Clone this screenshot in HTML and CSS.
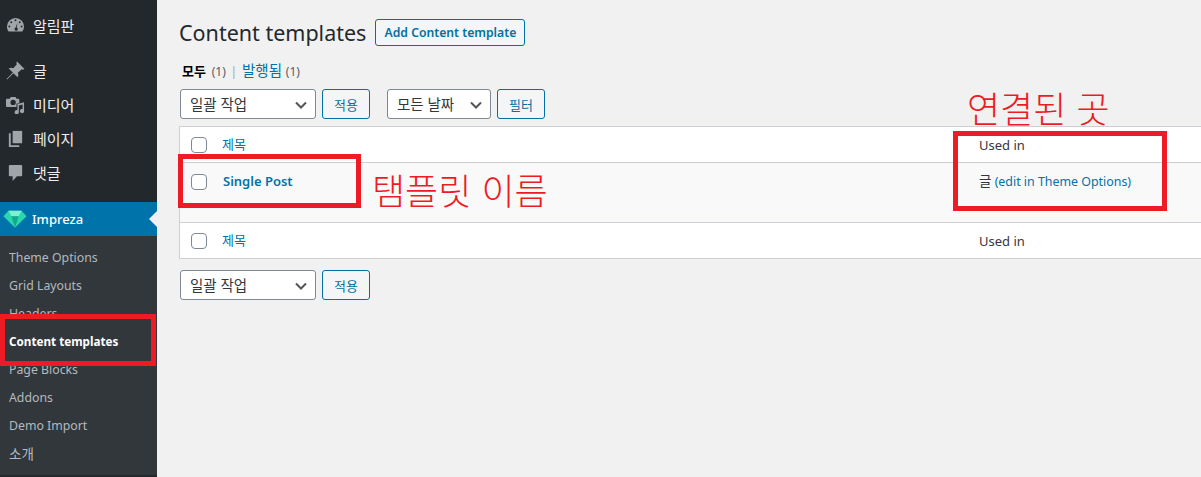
FILE: index.html
```html
<!DOCTYPE html>
<html lang="ko">
  <head>
    <meta charset="UTF-8" />
    <title>Content templates</title>
    <link rel="stylesheet" href="styles.css">
  </head>
  <body>
    <div class="sidebar">
      <ul class="menu">
        <li class="menu-item first">
          <svg class="icon" viewBox="0 0 20 20"><path fill-rule="evenodd" d="M10 2a9 9 0 0 0-9 9c0 2 .7 3.900 1.800 5.400h14.400A9 9 0 0 0 19 11a9 9 0 0 0-9-9zM10 3.500a1 1 0 1 1 0 2 1 1 0 0 1 0-2zM5.500 5.500a1 1 0 1 1 0 2 1 1 0 0 1 0-2zM14.500 5.500a1 1 0 1 1 0 2 1 1 0 0 1 0-2zM3.500 10a1 1 0 1 1 0 2 1 1 0 0 1 0-2zM16.500 10a1 1 0 1 1 0 2 1 1 0 0 1 0-2zM12 7l-.8 5.200a1.700 1.700 0 1 1-2.200 1.600c0-.7.400-1.300 1-1.500z"/></svg>
          <span>알림판</span>
        </li>
        <li class="menu-item gap">
          <svg class="icon" viewBox="1 1 18 18"><path d="M11.500 1.500l7 7-1.500.8-1-.6-3.800 3.400c.8 1.500.6 3-.2 4.400L8 12.500 2 18.500l-.5-.5 6-6-4-4c1.400-.8 2.900-1 4.400-.2l3.400-3.800-.6-1z"/></svg>
          <span>글</span>
        </li>
        <li class="menu-item">
          <svg class="icon" viewBox="0 0 20 20"><path fill-rule="evenodd" d="M5 2h5l1 2h2a1 1 0 0 1 1 1v3.500l-3 .8v3.200H1a1 1 0 0 1-1-1V5a1 1 0 0 1 1-1h3zM7.500 5a2.800 2.800 0 1 0 0 5.600 2.800 2.800 0 0 0 0-5.600z"/><path d="M19 7.500v9.300a2.200 2.200 0 1 1-1.500-2V10l-4 1v7a2.200 2.200 0 1 1-1.500-2V9.500z"/></svg>
          <span>미디어</span>
        </li>
        <li class="menu-item">
          <svg class="icon" viewBox="0 0 20 20"><path d="M7 2h10v13H7z"/><path d="M5 4.500v12.500h9v2H3V4.500z"/></svg>
          <span>페이지</span>
        </li>
        <li class="menu-item">
          <svg class="icon" viewBox="0 0 20 20"><path d="M4 2h12a1 1 0 0 1 1 1v10a1 1 0 0 1-1 1h-4.500L7 19v-5H4a1 1 0 0 1-1-1V3a1 1 0 0 1 1-1z"/></svg>
          <span>댓글</span>
        </li>
        <li class="menu-item current">
          <svg class="gem" viewBox="0 0 26 20"><path fill="#2ad6ae" d="M6 1h14l5.500 6L13 19.500.5 7z"/><path fill="#7df0d4" d="M6 1h14l-3 6H9z"/><path fill="#14a98c" d="M9 7h8l-4 12.500z"/></svg>
          <span>Impreza</span>
        </li>
      </ul>
      <ul class="submenu">
        <li>Theme Options</li>
        <li>Grid Layouts</li>
        <li>Headers</li>
        <li class="active">Content templates</li>
        <li>Page Blocks</li>
        <li>Addons</li>
        <li>Demo Import</li>
        <li class="ko">소개</li>
      </ul>
    </div>

    <div class="content">
      <div class="title-row">
        <h1>Content templates</h1>
        <a class="btn add-btn">Add Content template</a>
      </div>

      <div class="tabs">
        <b>모두</b> <span class="count first-count">(1)</span>
        <span class="sep">|</span>
        <a>발행됨</a> <span class="count">(1)</span>
      </div>

      <div class="actions">
        <div class="select bulk">일괄 작업<svg viewBox="0 0 12 8"><path d="M1 1.500l5 5 5-5"/></svg></div>
        <a class="btn apply">적용</a>
        <div class="select dates">모든 날짜<svg viewBox="0 0 12 8"><path d="M1 1.500l5 5 5-5"/></svg></div>
        <a class="btn apply">필터</a>
      </div>

      <div class="table">
        <div class="row head">
          <div class="col-title"><span class="check"></span><a class="sort">제목</a></div>
          <div class="col-used">Used in</div>
        </div>
        <div class="row body">
          <div class="col-title"><span class="check"></span><a class="post-name">Single Post</a></div>
          <div class="col-used"><span class="ko">글</span> <a>(edit in Theme Options)</a></div>
        </div>
        <div class="row foot">
          <div class="col-title"><span class="check"></span><a class="sort">제목</a></div>
          <div class="col-used">Used in</div>
        </div>
      </div>

      <div class="actions bottom">
        <div class="select bulk">일괄 작업<svg viewBox="0 0 12 8"><path d="M1 1.500l5 5 5-5"/></svg></div>
        <a class="btn apply">적용</a>
      </div>
    </div>

    <!-- red marks drawn over the screenshot -->
    <div class="mark mark-menu"></div>
    <div class="mark mark-name"></div>
    <div class="mark mark-used"></div>
    <div class="note note-name">탬플릿 이름</div>
    <div class="note note-used">연결된 곳</div>
  </body>
</html>
```

FILE: styles.css
```css
* {
  margin: 0;
  padding: 0;
  box-sizing: border-box;
  font-family: "Noto Sans", "Noto Sans CJK KR", sans-serif;
}
html, body {
  height: 477px;
  overflow: hidden;
}
body {
  display: flex;
  background: #f1f1f1;
  color: #3c434a;
  font-size: 13px;
}
a {
  color: #0073aa;
}
ul {
  list-style: none;
}

/* sidebar */
.sidebar {
  width: 157px;
  height: 477px;
  flex-shrink: 0;
  background: #23282d;
  color: #eee;
  padding-top: 8px;
}
.menu-item {
  display: flex;
  align-items: center;
  height: 34px;
  font-size: 15px;
}
.menu-item.gap {
  margin-top: 11px;
}
.menu-item .icon {
  width: 19px;
  height: 19px;
  margin: 0 8px 0 6px;
  fill: #a0a5aa;
}
.menu-item.current {
  position: relative;
  margin-top: 13px;
  background: #0073aa;
  color: #fff;
  font-size: 13px;
  font-weight: 500;
}
.menu-item.current::after {
  content: "";
  position: absolute;
  right: 0;
  top: 9px;
  border: 8px solid transparent;
  border-right-color: #f1f1f1;
  border-left-width: 0;
}
.gem {
  width: 24px;
  height: 20px;
  margin: 0 5px 0 3px;
}
.submenu {
  background: #32373c;
  padding: 8px 0 7px;
  color: #b4b9be;
}
.submenu li {
  height: 28px;
  line-height: 28px;
  padding-left: 9px;
  font-size: 12.300px;
}
.submenu li.active {
  color: #fff;
  font-weight: 700;
  font-size: 11.700px;
  line-height: 26px;
}
.submenu li.ko {
  font-size: 13.500px;
}

/* main */
.content {
  flex: 1;
  padding: 19px 0 0 22px;
}
.title-row {
  display: flex;
  align-items: center;
  gap: 8px;
  height: 27px;
}
h1 {
  font-size: 21.500px;
  font-weight: 400;
  color: #23282d;
}
.btn {
  display: inline-flex;
  align-items: center;
  justify-content: center;
  border: 1px solid #0071a1;
  border-radius: 3px;
  background: #f3f5f6;
  color: #0071a1;
}
.add-btn {
  width: 150px;
  height: 27px;
  margin-left: 1px;
  font-size: 12.200px;
  font-weight: 600;
}
.tabs {
  margin-top: 15px;
  height: 18px;
  line-height: 18px;
  padding-left: 3px;
  font-size: 14.500px;
  color: #555d66;
}
.tabs b {
  color: #000;
  font-size: 13px;
}
.tabs .count {
  font-size: 12px;
}
.tabs .first-count {
  margin-left: 2px;
}
.sep {
  color: #a0a5aa;
  font-size: 12px;
  margin: 0 1px;
}
.actions {
  display: flex;
  margin-top: 10px;
  margin-left: 1px;
}
.select {
  position: relative;
  display: flex;
  align-items: center;
  height: 30px;
  padding: 0 0 2px 9px;
  border: 1px solid #7e8993;
  border-radius: 3px;
  background: #fff;
  color: #32373c;
  font-size: 14.500px;
}
.select svg {
  position: absolute;
  right: 8px;
  top: 11px;
  width: 12px;
  height: 8px;
  fill: none;
  stroke: #555;
  stroke-width: 2;
}
.bulk {
  width: 136px;
}
.dates {
  width: 104px;
  margin-left: 17px;
}
.apply {
  width: 48px;
  height: 30px;
  margin-left: 6px;
  font-size: 13px;
}
.table {
  margin-top: 7px;
  background: #fff;
  border: 1px solid #ccd0d4;
  border-right: 0;
  height: 133px;
}
.row {
  display: flex;
  color: #32373c;
}
.row.head {
  height: 36px;
  border-bottom: 1px solid #ccd0d4;
}
.row.body {
  height: 60px;
  background: #f9f9f9;
  border-bottom: 1px solid #ccd0d4;
}
.row.foot {
  height: 35px;
}
.col-title {
  display: flex;
  align-items: flex-start;
  width: 799px;
  padding: 10px 0 0 11px;
}
.body .col-title {
  padding-top: 11px;
}
.col-used {
  padding-top: 9px;
  font-size: 13px;
}
.body .col-used {
  padding-top: 7px;
  font-size: 12.400px;
}
.body .col-used .ko {
  font-size: 13.500px;
}
.check {
  width: 16px;
  height: 16px;
  border: 1px solid #7e8993;
  border-radius: 4px;
  background: #fff;
  flex-shrink: 0;
}
.sort {
  margin-left: 15px;
  font-size: 13px;
  line-height: 15px;
}
.post-name {
  margin-left: 16px;
  font-size: 13px;
  font-weight: 600;
  line-height: 15px;
}
.bottom {
  margin-top: 11px;
}

/* annotations */
.mark {
  position: absolute;
  border: 5px solid #ed1c24;
}
.mark-menu {
  left: 0;
  top: 314px;
  width: 156px;
  height: 52px;
}
.mark-name {
  left: 178px;
  top: 154px;
  width: 183px;
  height: 54px;
}
.mark-used {
  left: 953px;
  top: 131px;
  width: 214px;
  height: 80px;
}
.note {
  position: absolute;
  color: #ed1c24;
  font-size: 36px;
  line-height: 40px;
  white-space: nowrap;
  font-family: "Noto Sans CJK KR", sans-serif;
  font-weight: 300;
}
.note-name {
  left: 372px;
  top: 169px;
}
.note-used {
  left: 967px;
  top: 87px;
}
```
